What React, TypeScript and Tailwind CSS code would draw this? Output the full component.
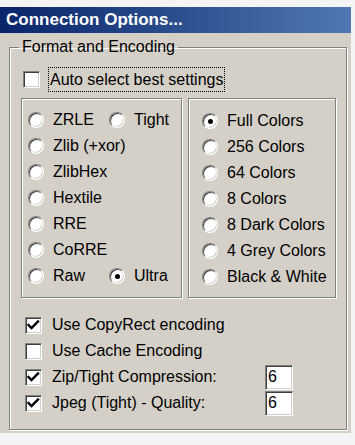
import React from 'react';

const font = { fontFamily: '"Liberation Sans", Arial, sans-serif' };

function Radio({ checked = false }: { checked?: boolean }) {
  return (
    <span className="flex h-4 w-4 shrink-0 items-center justify-center rounded-full border border-t-[#808080] border-l-[#808080] border-b-white border-r-white bg-white shadow-[inset_1px_1px_0_#404040,inset_-1px_-1px_0_#d4d0c8]">
      {checked && <span className="h-[5px] w-[5px] rounded-full bg-black" />}
    </span>
  );
}

function Check({ checked = false }: { checked?: boolean }) {
  return (
    <span className="flex h-[17px] w-[17px] shrink-0 items-center justify-center border border-t-[#808080] border-l-[#808080] border-b-white border-r-white bg-white shadow-[inset_1px_1px_0_#404040,inset_-1px_-1px_0_#d4d0c8]">
      {checked && (
        <svg width="15" height="15" viewBox="0 0 15 15">
          <polyline points="2.5,7 5.5,10 12,3.5" fill="none" stroke="#000" strokeWidth="2.4" strokeLinecap="square" />
        </svg>
      )}
    </span>
  );
}

function RadioItem({ label, checked = false, width }: { label: string; checked?: boolean; width?: string }) {
  return (
    <div className={`flex items-center gap-[9px] ${width ?? ''}`}>
      <Radio checked={checked} />
      <span>{label}</span>
    </div>
  );
}

function NumBox({ value }: { value: string }) {
  return (
    <div className="flex h-[25px] w-[28px] items-center border border-t-[#808080] border-l-[#808080] border-b-white border-r-white bg-white pl-[2px] shadow-[inset_1px_1px_0_#404040,inset_-1px_-1px_0_#d4d0c8]">
      {value}
    </div>
  );
}

const etched = 'border border-[#808080] shadow-[1px_1px_0_#fff,inset_1px_1px_0_#fff]';

export default function App() {
  const colors = ['Full Colors', '256 Colors', '64 Colors', '8 Colors', '8 Dark Colors', '4 Grey Colors', 'Black & White'];

  return (
    <div className="h-[445px] w-[355px] overflow-hidden bg-[#f4f4f4] pt-[7px] text-[16px] leading-[18px] text-black" style={font}>
      <div className="w-[351px]">
        {/* title bar */}
        <div className="flex h-[26px] items-center bg-gradient-to-r from-[#0a246a] to-[#5079b3] pl-[6px] text-[17px] font-bold text-white">
          Connection Options...
        </div>

        {/* dialog body */}
        <div className="h-[400px] bg-[#d4d0c8] pt-[5px] pr-[4px] pl-[9px]">
          <fieldset className={`${etched} h-[392px]`}>
            <legend className="ml-[9px] px-[3px] leading-[18px]">Format and Encoding</legend>

            <div className="pl-[11px]">
              <div className="mt-[11px] ml-[2px] flex h-[25px] items-center gap-[8px]">
                <Check />
                <span className="flex h-[25px] items-center border border-dotted border-black px-[1px]">
                  Auto select best settings
                </span>
              </div>

              <div className="mt-[6px] flex gap-[6px]">
                <div className={`${etched} h-[200px] w-[161px] pt-[8px] pl-[6px]`}>
                  <div className="flex h-[26px] items-center">
                    <RadioItem label="ZRLE" width="w-[81px]" />
                    <RadioItem label="Tight" />
                  </div>
                  {['Zlib (+xor)', 'ZlibHex', 'Hextile', 'RRE', 'CoRRE'].map((l) => (
                    <div key={l} className="flex h-[26px] items-center">
                      <RadioItem label={l} />
                    </div>
                  ))}
                  <div className="flex h-[26px] items-center">
                    <RadioItem label="Raw" width="w-[81px]" />
                    <RadioItem label="Ultra" checked />
                  </div>
                </div>

                <div className={`${etched} h-[200px] w-[148px] pt-[9px] pl-[13px]`}>
                  {colors.map((c, i) => (
                    <div key={c} className="flex h-[26px] items-center">
                      <RadioItem label={c} checked={i === 0} />
                    </div>
                  ))}
                </div>
              </div>

              <div className="mt-[14px] ml-[4px]">
                <div className="flex h-[26px] items-center gap-[10px]">
                  <Check checked />
                  <span>Use CopyRect encoding</span>
                </div>
                <div className="flex h-[26px] items-center gap-[10px]">
                  <Check />
                  <span>Use Cache Encoding</span>
                </div>
                <div className="flex h-[26px] items-center gap-[10px]">
                  <Check checked />
                  <span className="w-[203px]">Zip/Tight Compression:</span>
                  <NumBox value="6" />
                </div>
                <div className="flex h-[26px] items-center gap-[10px]">
                  <Check checked />
                  <span className="w-[203px]">Jpeg (Tight) - Quality:</span>
                  <NumBox value="6" />
                </div>
              </div>
            </div>
          </fieldset>
        </div>
      </div>
    </div>
  );
}
